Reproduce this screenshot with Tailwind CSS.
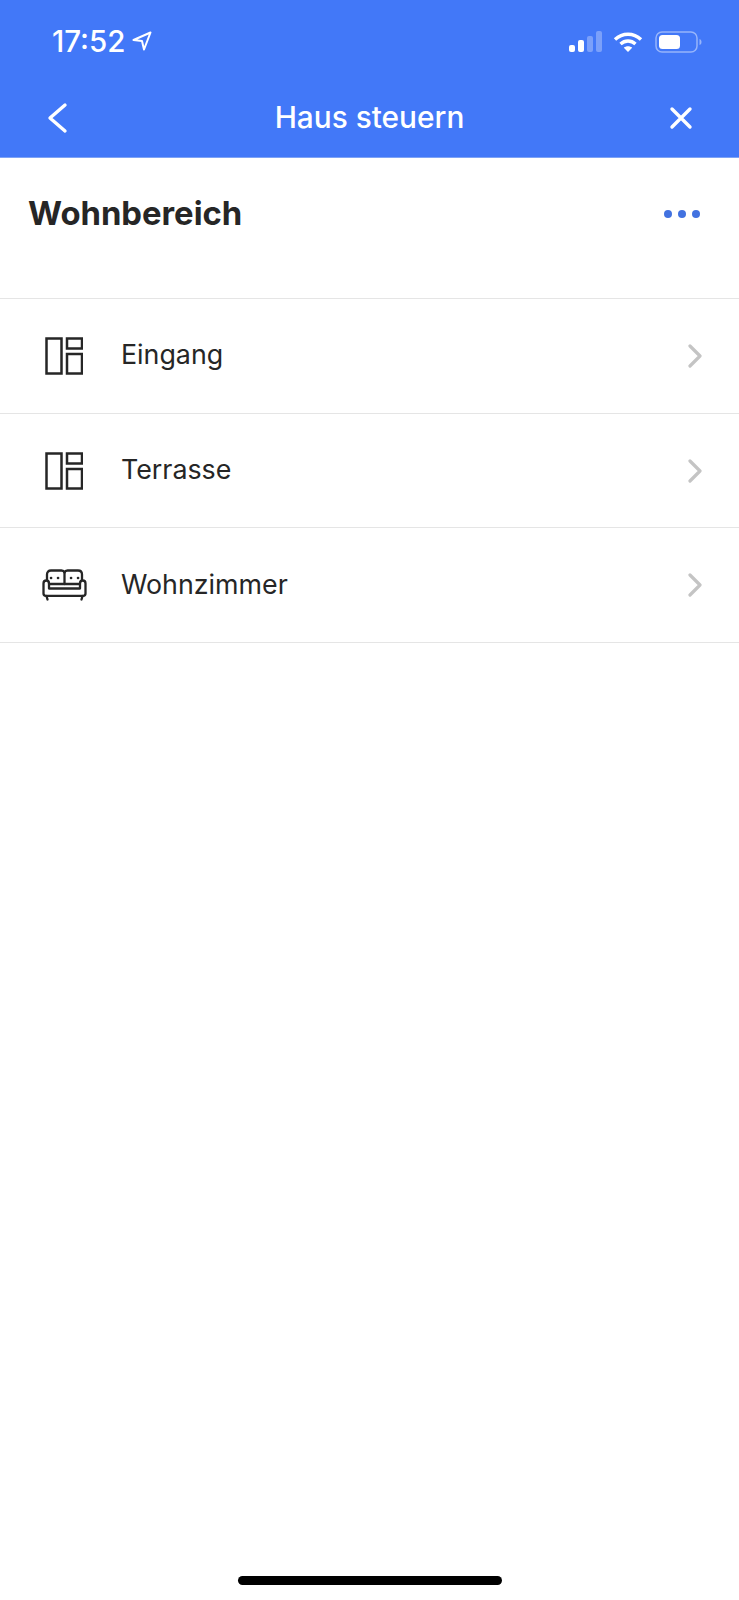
<!DOCTYPE html>
<html lang="de">
<head>
    <meta charset="UTF-8">
    <meta name="viewport" content="width=device-width, initial-scale=1.0">
    <title>Haus steuern</title>
    <script src="https://cdn.jsdelivr.net/npm/@tailwindcss/browser@4"></script>
</head>
<body class="bg-white font-['Inter','Liberation_Sans',sans-serif]">
    <div class="relative w-[739px] h-[1600px] overflow-hidden bg-white">
        <!-- blue header with status bar -->
        <header class="h-[158px] bg-[#4278f8] border-b border-[#7ea3f5] text-white">
            <div class="h-[80px] flex items-center pl-[52px] pr-[37px] pt-[3px]">
                <span class="text-[29.500px] font-medium leading-none">17:52</span>
                <svg class="ml-[7px] mt-[-1px]" width="20" height="20" viewBox="0 0 20 20" fill="none" stroke="white" stroke-width="2" stroke-linejoin="round"><path d="M1.5 9 18.5 1.5 12 18.5 10 10Z"/></svg>
                <div class="ml-auto flex items-center">
                    <svg width="33" height="22" viewBox="0 0 33 22" fill="white"><rect x="0" y="14" width="6" height="7" rx="2"/><rect x="9" y="9" width="6" height="12" rx="2"/><rect x="18" y="5" width="6" height="16" rx="2" fill-opacity=".3"/><rect x="27" y="0" width="6" height="21" rx="2" fill-opacity=".3"/></svg>
                    <svg class="ml-[11px]" width="30" height="22" viewBox="0 0 30 22" fill="none" stroke="white" stroke-width="3.4"><path d="M2 8.5C9.500 1.500 20.500 1.500 28 8.500"/><path d="M7.500 13C12 9 18 9 22.500 13"/><path d="M15 21 10.800 16.800C13 14.800 17 14.800 19.200 16.800Z" fill="white" stroke="none"/></svg>
                    <svg class="ml-[12px]" width="47" height="22" viewBox="0 0 47 22" fill="none"><rect x="1" y="1" width="41" height="20" rx="6" stroke="white" stroke-opacity=".45" stroke-width="1.500"/><rect x="4" y="4" width="21" height="14" rx="3.500" fill="white"/><path d="M44.500 8c1.500.5 2 1.500 2 3s-.5 2.500-2 3z" fill="white" fill-opacity=".45"/></svg>
                </div>
            </div>
            <div class="h-[77px] flex items-center justify-between pl-[44px] pr-[46px] pb-[2px]">
                <svg width="24" height="32" viewBox="0 0 24 32" fill="none" stroke="white" stroke-width="3.400" stroke-linecap="round" stroke-linejoin="round"><path d="M20 3 5 16 20 29" transform="translate(1 0)"/></svg>
                <h1 class="text-[29.800px] font-medium leading-none ml-[2px]">Haus steuern</h1>
                <svg width="24" height="24" viewBox="0 0 24 24" fill="none" stroke="white" stroke-width="3.400" stroke-linecap="round"><path d="M3 3 21 21M21 3 3 21"/></svg>
            </div>
        </header>

        <!-- section title -->
        <div class="h-[141px] flex items-start justify-between pl-[28px] pr-[39px] border-b border-[#e5e5e5]">
            <h2 class="mt-[33px] text-[32.800px] font-bold leading-[44px] text-[#262626]">Wohnbereich</h2>
            <div class="mt-[52px] flex gap-[6px]">
                <span class="size-[8px] rounded-full bg-[#4272e0]"></span>
                <span class="size-[8px] rounded-full bg-[#4272e0]"></span>
                <span class="size-[8px] rounded-full bg-[#4272e0]"></span>
            </div>
        </div>

        <!-- rooms -->
        <ul>
            <li class="h-[114.7px] flex items-center border-b border-[#e5e5e5] pl-[45px] pr-[36px]">
                <svg class="w-[38px] shrink-0" width="38" height="38" viewBox="0 0 38 38" fill="none" stroke="#262626" stroke-width="2.500"><rect x="1.500" y="1.500" width="15" height="35"/><rect x="22" y="1.500" width="15" height="10"/><rect x="22" y="17" width="15" height="19.500"/></svg>
                <span class="ml-[38px] mb-[2px] text-[26.800px] text-[#262626] leading-none">Eingang</span>
                <svg class="ml-auto" width="16" height="24" viewBox="0 0 16 24" fill="none" stroke="#c4c4c4" stroke-width="3.200" stroke-linecap="round" stroke-linejoin="round"><path d="M3 2 13 12 3 22"/></svg>
            </li>
            <li class="h-[114.7px] flex items-center border-b border-[#e5e5e5] pl-[45px] pr-[36px]">
                <svg class="w-[38px] shrink-0" width="38" height="38" viewBox="0 0 38 38" fill="none" stroke="#262626" stroke-width="2.500"><rect x="1.500" y="1.500" width="15" height="35"/><rect x="22" y="1.500" width="15" height="10"/><rect x="22" y="17" width="15" height="19.500"/></svg>
                <span class="ml-[38px] mb-[2px] text-[26.800px] text-[#262626] leading-none">Terrasse</span>
                <svg class="ml-auto" width="16" height="24" viewBox="0 0 16 24" fill="none" stroke="#c4c4c4" stroke-width="3.200" stroke-linecap="round" stroke-linejoin="round"><path d="M3 2 13 12 3 22"/></svg>
            </li>
            <li class="h-[114.7px] flex items-center border-b border-[#e5e5e5] pl-[42px] pr-[36px]">
                <svg class="w-[45px] shrink-0" width="45" height="32" viewBox="0 0 45 32" fill="none" stroke="#262626" stroke-width="2.300" stroke-linecap="round" stroke-linejoin="round">
                    <!-- back cushions -->
                    <path d="M5 11V5.500C5 3 6.500 1.500 9 1.500H19.500C21 1.500 22 2.200 22.500 3.500C23 2.200 24 1.500 25.500 1.500H36C38.500 1.500 40 3 40 5.500V11"/>
                    <path d="M22.500 3.500V15"/>
                    <path d="M7 15H38"/>
                    <!-- arms and seat -->
                    <path d="M7 19.500V14.500C7 12.800 5.800 11.500 4.300 11.500C2.600 11.500 1.500 12.800 1.500 14.500V24.500C1.500 26 2.500 26.800 3.800 26.800H41.200C42.500 26.800 43.500 26 43.500 24.500V14.500C43.500 12.800 42.400 11.500 40.700 11.500C39.200 11.500 38 12.800 38 14.500V19.500H7Z"/>
                    <path d="M4.500 27 5.500 30.500M40.500 27 39.500 30.500"/>
                    <path d="M9 9h.1M16 9h.1M29 9h.1M36 9h.1" stroke-width="2.600"/>
                </svg>
                <span class="ml-[34px] mb-[2px] text-[26.800px] text-[#262626] leading-none">Wohnzimmer</span>
                <svg class="ml-auto" width="16" height="24" viewBox="0 0 16 24" fill="none" stroke="#c4c4c4" stroke-width="3.200" stroke-linecap="round" stroke-linejoin="round"><path d="M3 2 13 12 3 22"/></svg>
            </li>
        </ul>

        <!-- home indicator -->
        <div class="absolute left-[238px] top-[1576px] w-[264px] h-[9px] rounded-full bg-black"></div>
    </div>
</body>
</html>
